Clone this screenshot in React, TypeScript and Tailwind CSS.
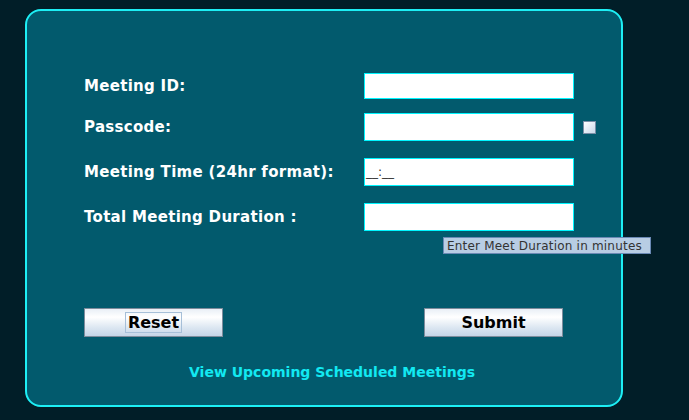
import React from "react";

export default function App() {
  const label = "text-white text-[15px] font-bold tracking-[0.3px] leading-none";
  const input =
    "w-[210px] bg-white border border-[#00f6ff] outline-none px-[1px] text-[12px] text-[#333333]";
  const btn =
    "w-[139px] h-[29px] border border-[#7d8c9c] bg-[linear-gradient(to_bottom,#e9eff6_0%,#ffffff_30%,#dbe6f1_70%,#c5d5e7_100%)] flex items-center justify-center text-[16px] font-bold text-black";
  return (
    <div
      className="w-[689px] h-[420px] bg-[#011e28] overflow-hidden pt-[9px] pl-[25px]"
      style={{ fontFamily: '"DejaVu Sans", Verdana, sans-serif' }}
    >
      <div className="w-[598px] h-[398px] rounded-[16px] border-2 border-[#1deff5] bg-[#025a6d] flex flex-col pl-[57px] pt-[62px]">
        {/* Row 1 */}
        <div className="flex items-center h-[26px]">
          <div className={`${label} w-[280px]`}>Meeting ID:</div>
          <div className={`${input} h-[26px]`} />
        </div>
        {/* Row 2 */}
        <div className="flex items-center h-[28px] mt-[14px]">
          <div className={`${label} w-[280px]`}>Passcode:</div>
          <div className={`${input} h-[28px]`} />
          <div className="ml-[9px] w-[13px] h-[13px] border border-[#7a8ea6] bg-[linear-gradient(to_bottom_right,#ffffff,#c9d9ea)]" />
        </div>
        {/* Row 3 */}
        <div className="flex items-center h-[28px] mt-[17px]">
          <div className={`${label} w-[280px]`}>Meeting Time (24hr format):</div>
          <div className={`${input} h-[28px] flex items-center`}>
            <span className="tracking-[0px]">__:__</span>
          </div>
        </div>
        {/* Row 4 */}
        <div className="flex items-center h-[28px] mt-[17px]">
          <div className={`${label} w-[280px]`}>Total Meeting Duration :</div>
          <div className="relative">
            <div className={`${input} h-[28px]`} />
            <div className="absolute left-[79px] top-[34px] h-[17px] w-[208px] bg-[#b8cde4] border border-[#6a89b5] flex items-center pl-[3px] text-[12px] tracking-[0.2px] text-[#333333] whitespace-nowrap">
              Enter Meet Duration in minutes
            </div>
          </div>
        </div>
        {/* Buttons */}
        <div className="flex mt-[77px] gap-[201px]">
          <div className={btn}>
            <span className="border border-[#a6bfd8] px-[1px] h-[21px] w-[57px] flex items-center justify-center leading-none">
              Reset
            </span>
          </div>
          <div className={btn}>Submit</div>
        </div>
        {/* Link */}
        <div className="mt-[27px] pl-[105px] text-[14px] font-bold text-[#12e9f2] leading-[17px] whitespace-nowrap">
          View Upcoming Scheduled Meetings
        </div>
      </div>
    </div>
  );
}
